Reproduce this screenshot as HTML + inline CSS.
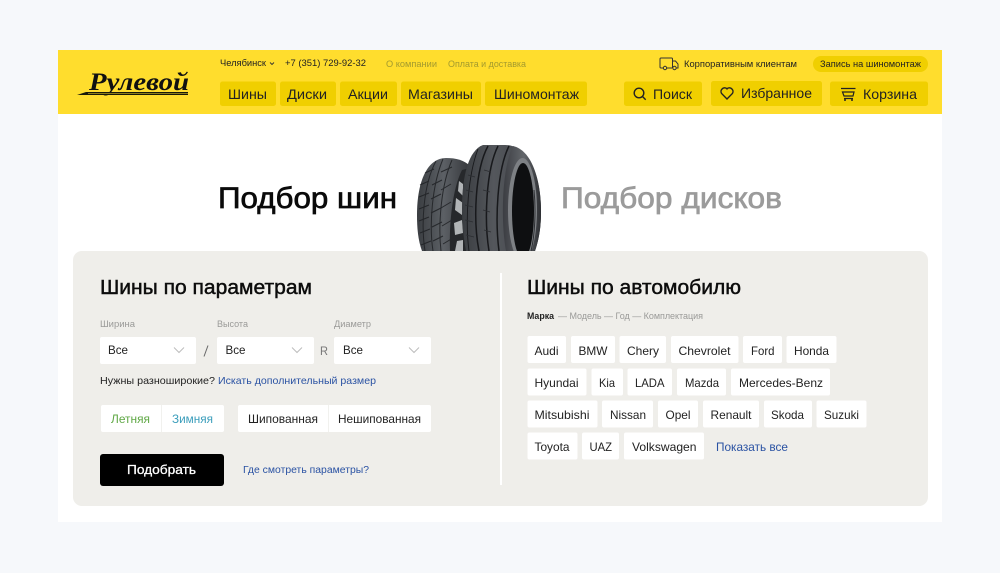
<!DOCTYPE html>
<html lang="ru"><head><meta charset="utf-8"><title>Рулевой — Подбор шин</title>
<style>
html,body{margin:0;padding:0;background:#f6f8fb;width:1000px;height:573px;overflow:hidden}
svg{display:block}
text{font-family:"Liberation Sans","Noto Sans CJK SC",sans-serif;fill:#1a1a1a}
.n{font-size:14px;fill:#222}
.t{font-size:9px;fill:#222}
.m{font-size:9px;fill:#a39a2e}
.l{font-size:9px;fill:#9a9a98}
.s{font-size:12px;fill:#222}
.c{font-size:12px;fill:#222}
.b{font-size:10.5px;fill:#2a52a3}
.h{font-size:20px;fill:#0c0c0c;stroke:#0c0c0c;stroke-width:.45px}
.y{fill:#f0cf00}
.w{fill:#fff}
</style></head><body>
<svg width="1000" height="573" viewBox="0 0 1000 573" xmlns="http://www.w3.org/2000/svg">
<defs>
<linearGradient id="tr" x1="0" x2="1" y1="0" y2="0"><stop offset="0" stop-color="#3a3d41"/><stop offset=".4" stop-color="#54575c"/><stop offset=".8" stop-color="#46494e"/><stop offset="1" stop-color="#33363a"/></linearGradient>
<linearGradient id="tl" x1="0" x2="1" y1="0" y2="0"><stop offset="0" stop-color="#3a3d41"/><stop offset=".5" stop-color="#5c6065"/><stop offset="1" stop-color="#35373b"/></linearGradient>
<linearGradient id="sw" x1="0" x2="1" y1="0" y2="0"><stop offset="0" stop-color="#3b3d42"/><stop offset=".55" stop-color="#63666b"/><stop offset="1" stop-color="#2d2f33"/></linearGradient>
<clipPath id="cp"><rect x="400" y="135" width="160" height="116"/></clipPath>
</defs>
<rect x="58" y="50" width="884" height="472" fill="#fff"/>
<rect x="58" y="50" width="884" height="64" fill="#ffdd2d"/>

<!-- logo -->
<text x="89" y="90" textLength="100" lengthAdjust="spacingAndGlyphs" style="font-family:'Liberation Serif',serif;font-size:25px;font-weight:bold;font-style:italic;fill:#111">Рулевой</text>
<path d="M86 92H188V95H77Z" fill="#1a1a0a"/>
<path d="M88 93.500H188" stroke="#ffdd2d" stroke-width=".5"/>

<!-- top row -->
<text class="t" x="220" y="66" textLength="46" lengthAdjust="spacingAndGlyphs">Челябинск</text>
<path d="M270 62.500l2 2 2-2" fill="none" stroke="#333" stroke-width=".9"/>
<text class="t" x="285" y="66" textLength="81" lengthAdjust="spacingAndGlyphs">+7 (351) 729-92-32</text>
<text class="m" x="386" y="67" textLength="51" lengthAdjust="spacingAndGlyphs">О компании</text>
<text class="m" x="448" y="67" textLength="78" lengthAdjust="spacingAndGlyphs">Оплата и доставка</text>
<g fill="none" stroke="#333" stroke-width="1">
<path d="M663 68h-2a1 1 0 0 1-1-1V59a1 1 0 0 1 1-1h10.500a1 1 0 0 1 1 1v9M667 68h5M672.500 61h3l2.500 3v4h-1.500"/>
<circle cx="665" cy="68" r="1.700"/><circle cx="674.500" cy="68" r="1.700"/>
</g>
<text class="t" x="684" y="67" textLength="113" lengthAdjust="spacingAndGlyphs">Корпоративным клиентам</text>
<rect class="y" x="813" y="56" width="115" height="16" rx="8"/>
<text class="t" x="820" y="67" textLength="101" lengthAdjust="spacingAndGlyphs">Запись на шиномонтаж</text>

<!-- nav -->
<rect class="y" x="220" y="81.500" width="56" height="24.500" rx="2.500"/>
<rect class="y" x="280" y="81.500" width="56" height="24.500" rx="2.500"/>
<rect class="y" x="340" y="81.500" width="57" height="24.500" rx="2.500"/>
<rect class="y" x="401" y="81.500" width="80" height="24.500" rx="2.500"/>
<rect class="y" x="485" y="81.500" width="102" height="24.500" rx="2.500"/>
<rect class="y" x="624" y="81.500" width="78" height="24.500" rx="2.500"/>
<rect class="y" x="711" y="81" width="111" height="25" rx="2.500"/>
<rect class="y" x="830" y="81.500" width="98" height="24.500" rx="2.500"/>
<text class="n" x="228" y="99" textLength="39" lengthAdjust="spacingAndGlyphs">Шины</text>
<text class="n" x="287" y="99" textLength="40" lengthAdjust="spacingAndGlyphs">Диски</text>
<text class="n" x="348" y="99" textLength="40" lengthAdjust="spacingAndGlyphs">Акции</text>
<text class="n" x="408" y="99" textLength="65" lengthAdjust="spacingAndGlyphs">Магазины</text>
<text class="n" x="494" y="99" textLength="85" lengthAdjust="spacingAndGlyphs">Шиномонтаж</text>
<g fill="none" stroke="#222" stroke-width="1.400">
<circle cx="639" cy="93" r="4.800"/><path d="M642.500 96.500l3.200 3.200"/>
<path d="M727 99l-5.200-5.300a3.600 3.600 0 0 1 5-5.100l.2.300.2-.3a3.600 3.600 0 0 1 5 5.100z"/>
<path d="M841 88.500h14.500M842.500 92h11.500l-1 4h-9zM844 98.500h9" stroke-width="1.200"/>
<circle cx="845" cy="100" r="1" fill="#222" stroke="none"/><circle cx="852" cy="100" r="1" fill="#222" stroke="none"/>
</g>
<text class="n" x="653" y="99" textLength="39" lengthAdjust="spacingAndGlyphs">Поиск</text>
<text class="n" x="741" y="98" textLength="71" lengthAdjust="spacingAndGlyphs">Избранное</text>
<text class="n" x="863" y="99" textLength="54" lengthAdjust="spacingAndGlyphs">Корзина</text>

<!-- hero -->
<text x="218" y="208" textLength="179" lengthAdjust="spacingAndGlyphs" style="font-size:30px;fill:#0a0a0a;stroke:#0a0a0a;stroke-width:.7px">Подбор шин</text>
<text x="561" y="208" textLength="221" lengthAdjust="spacingAndGlyphs" style="font-size:30px;fill:#9b9b9b;stroke:#9b9b9b;stroke-width:.7px">Подбор дисков</text>

<!-- tyres -->
<g clip-path="url(#cp)">
<path d="M417 215C417 180 428 158 446 158C456 158 464 160 470 166V251H422C418 240 417 228 417 215Z" fill="url(#tl)"/>
<g fill="none" stroke="#1f2124" stroke-width="1" opacity=".85">
<path d="M425 251C421 225 423 185 436 161M433 251C429 225 432 185 443 159M441 251C438 225 441 185 452 160"/>
<path d="M420 185l9-4M419 197l10-4M419 209l10-4M419 221l10-4M420 233l10-4M421 245l10-4M425 173l9-4M432 185l10-5M431 199l10-5M431 213l10-5M432 227l10-5M433 241l10-5M441 172l11-5M441 190l10-6M441 208l10-6M442 226l10-6M443 244l10-6"/>
</g>
<path d="M450 251C449 225 452 190 462 170L470 168V251Z" fill="#26282b"/>
<path d="M455 251l2-10 6-1v11ZM454 223l8-3 1 13-8 2ZM456 198l7 5-1 12-7-5ZM459 181l4 3v12l-5-5Z" fill="#b1b4b6"/>
<path d="M483 145H505C527 145 541 172 541 212C541 230 538 242 535 251H466C463 235 462 222 462 208C462 175 469 150 483 145Z" fill="url(#tr)"/>
<g fill="none" stroke="#18191c" stroke-width="1.500">
<path d="M479 251C473 220 475 170 488 146M489 251C484 220 486 170 498 146M499 251C495 220 497 170 509 146"/>
<path d="M469 251C465 220 468 175 478 149" stroke-width=".9"/>
</g>
<g fill="none" stroke="#2b2d31" stroke-width=".7">
<path d="M468 175l7 2M466 190l7 2M465 205l8 2M465 220l8 2M466 235l8 2M484 170l7 2M483 190l7 2M483 210l7 2M484 230l7 2"/>
</g>
<path d="M513 146C531 150 541 178 541 212C541 230 538 242 535 251H506C501 225 501 170 513 146Z" fill="url(#sw)"/>
<ellipse cx="522.500" cy="210" rx="14.500" ry="52" fill="#7d8084"/>
<ellipse cx="523" cy="211" rx="11" ry="48" fill="#0e0f11"/>
<path d="M534 190C536 210 535 235 531 251" fill="none" stroke="#2d2f33" stroke-width="1"/>
</g>

<!-- panel -->
<rect x="73" y="251" width="855" height="255" rx="9" fill="#efeeea"/>
<rect x="500" y="273" width="2" height="212" fill="#fff"/>
<text class="h" x="100" y="294" textLength="212" lengthAdjust="spacingAndGlyphs">Шины по параметрам</text>
<text class="h" x="527" y="294" textLength="214" lengthAdjust="spacingAndGlyphs">Шины по автомобилю</text>

<!-- left form -->
<text class="l" x="100" y="327" textLength="35" lengthAdjust="spacingAndGlyphs">Ширина</text>
<text class="l" x="217" y="327" textLength="31" lengthAdjust="spacingAndGlyphs">Высота</text>
<text class="l" x="334" y="327" textLength="37" lengthAdjust="spacingAndGlyphs">Диаметр</text>
<rect class="w" x="100" y="337" width="96" height="27" rx="2"/>
<rect class="w" x="217" y="337" width="97" height="27" rx="2"/>
<rect class="w" x="334" y="337" width="97" height="27" rx="2"/>
<text class="s" x="108" y="354" textLength="20" lengthAdjust="spacingAndGlyphs">Все</text>
<text class="s" x="225.500" y="354" textLength="20" lengthAdjust="spacingAndGlyphs">Все</text>
<text class="s" x="343" y="354" textLength="20" lengthAdjust="spacingAndGlyphs">Все</text>
<g fill="none" stroke="#bdbdbd" stroke-width="1"><path d="M174 347.500l5 5 5-5M292 347.500l5 5 5-5M409 347.500l5 5 5-5"/></g>
<path d="M204 356.500l4-11" stroke="#666" stroke-width="1"/>
<text x="320" y="355" textLength="8" lengthAdjust="spacingAndGlyphs" style="font-size:12px;fill:#777">R</text>
<text x="100" y="384" textLength="115" lengthAdjust="spacingAndGlyphs" style="font-size:10.500px;fill:#222">Нужны разноширокие?</text>
<text class="b" x="218" y="384" textLength="158" lengthAdjust="spacingAndGlyphs">Искать дополнительный размер</text>

<rect class="w" x="101" y="405" width="123" height="27" rx="2"/>
<rect x="161" y="405" width="1" height="27" fill="#f1f1ee"/>
<rect class="w" x="238" y="405" width="193" height="27" rx="2"/>
<rect x="328" y="405" width="1" height="27" fill="#f1f1ee"/>
<text x="111" y="423" textLength="39" lengthAdjust="spacingAndGlyphs" style="font-size:12px;fill:#5fa845">Летняя</text>
<text x="172" y="423" textLength="41" lengthAdjust="spacingAndGlyphs" style="font-size:12px;fill:#3a9dbb">Зимняя</text>
<text class="s" x="248" y="423" textLength="70" lengthAdjust="spacingAndGlyphs">Шипованная</text>
<text class="s" x="338" y="423" textLength="83" lengthAdjust="spacingAndGlyphs">Нешипованная</text>
<rect x="100" y="454" width="124" height="32" rx="3" fill="#000"/>
<text x="127" y="474" textLength="69" lengthAdjust="spacingAndGlyphs" style="font-size:13px;fill:#fff;stroke:#fff;stroke-width:.3px">Подобрать</text>
<text class="b" x="243" y="473" textLength="126" lengthAdjust="spacingAndGlyphs" style="font-size:10px">Где смотреть параметры?</text>

<!-- right -->
<text x="527" y="319" textLength="27" lengthAdjust="spacingAndGlyphs" style="font-size:9px;font-weight:bold;fill:#222">Марка</text>
<text class="l" x="558" y="319" textLength="145" lengthAdjust="spacing">— Модель — Год — Комплектация</text>

<g class="w">
<rect x="527.500" y="336" width="38.500" height="27" rx="2"/><rect x="571" y="336" width="44" height="27" rx="2"/><rect x="619.500" y="336" width="46.500" height="27" rx="2"/><rect x="671" y="336" width="67.500" height="27" rx="2"/><rect x="743" y="336" width="39" height="27" rx="2"/><rect x="786.500" y="336" width="50" height="27" rx="2"/>
<rect x="527.500" y="368.500" width="59" height="27" rx="2"/><rect x="591.500" y="368.500" width="31.500" height="27" rx="2"/><rect x="627.500" y="368.500" width="44.500" height="27" rx="2"/><rect x="677" y="368.500" width="49" height="27" rx="2"/><rect x="731" y="368.500" width="99" height="27" rx="2"/>
<rect x="527.500" y="400.500" width="70" height="27" rx="2"/><rect x="602" y="400.500" width="51" height="27" rx="2"/><rect x="658" y="400.500" width="40" height="27" rx="2"/><rect x="703" y="400.500" width="56" height="27" rx="2"/><rect x="764" y="400.500" width="48" height="27" rx="2"/><rect x="816.500" y="400.500" width="50" height="27" rx="2"/>
<rect x="527.500" y="432.500" width="50" height="27" rx="2"/><rect x="582" y="432.500" width="37" height="27" rx="2"/><rect x="624" y="432.500" width="80" height="27" rx="2"/>
</g>
<text class="c" x="534.500" y="355" textLength="24" lengthAdjust="spacingAndGlyphs">Audi</text>
<text class="c" x="578.500" y="355" textLength="29" lengthAdjust="spacingAndGlyphs">BMW</text>
<text class="c" x="627" y="355" textLength="32" lengthAdjust="spacingAndGlyphs">Chery</text>
<text class="c" x="678.500" y="355" textLength="52" lengthAdjust="spacingAndGlyphs">Chevrolet</text>
<text class="c" x="751" y="355" textLength="23.500" lengthAdjust="spacingAndGlyphs">Ford</text>
<text class="c" x="794" y="355" textLength="35" lengthAdjust="spacingAndGlyphs">Honda</text>
<text class="c" x="534.500" y="387" textLength="44" lengthAdjust="spacingAndGlyphs">Hyundai</text>
<text class="c" x="599" y="387" textLength="16" lengthAdjust="spacingAndGlyphs">Kia</text>
<text class="c" x="635" y="387" textLength="29.500" lengthAdjust="spacingAndGlyphs">LADA</text>
<text class="c" x="685" y="387" textLength="34" lengthAdjust="spacingAndGlyphs">Mazda</text>
<text class="c" x="739" y="387" textLength="84" lengthAdjust="spacingAndGlyphs">Mercedes-Benz</text>
<text class="c" x="534.500" y="419" textLength="55" lengthAdjust="spacingAndGlyphs">Mitsubishi</text>
<text class="c" x="610" y="419" textLength="36" lengthAdjust="spacingAndGlyphs">Nissan</text>
<text class="c" x="665.500" y="419" textLength="25" lengthAdjust="spacingAndGlyphs">Opel</text>
<text class="c" x="710.500" y="419" textLength="41" lengthAdjust="spacingAndGlyphs">Renault</text>
<text class="c" x="771" y="419" textLength="33" lengthAdjust="spacingAndGlyphs">Skoda</text>
<text class="c" x="824" y="419" textLength="35" lengthAdjust="spacingAndGlyphs">Suzuki</text>
<text class="c" x="534.500" y="451" textLength="35" lengthAdjust="spacingAndGlyphs">Toyota</text>
<text class="c" x="589.500" y="451" textLength="22.500" lengthAdjust="spacingAndGlyphs">UAZ</text>
<text class="c" x="632" y="451" textLength="64.500" lengthAdjust="spacingAndGlyphs">Volkswagen</text>
<text x="716" y="451" textLength="72" lengthAdjust="spacingAndGlyphs" style="font-size:12px;fill:#2a52a3">Показать все</text>
</svg>
</body></html>
